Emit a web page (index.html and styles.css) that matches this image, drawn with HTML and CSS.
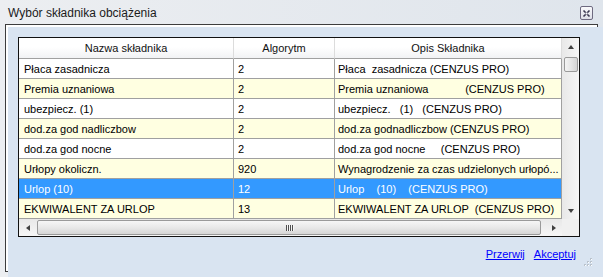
FILE: index.html
```html
<!DOCTYPE html>
<html lang="pl">
<head>
<meta charset="utf-8">
<title>Wybór składnika obciążenia</title>
<link rel="stylesheet" href="styles.css">
</head>
<body>
<div class="window">
  <div class="titlebar">
    <span class="title">Wybór składnika obciążenia</span>
    <span class="close">
      <svg width="13" height="14" viewBox="0 0 13 14">
        <defs>
          <linearGradient id="cg" x1="0" y1="0" x2="0" y2="1">
            <stop offset="0" stop-color="#fbfbfd"/>
            <stop offset="1" stop-color="#dcdde6"/>
          </linearGradient>
        </defs>
        <rect x="0.5" y="0.5" width="12" height="13" rx="1.5" fill="url(#cg)" stroke="#6e6a80"/>
        <path d="M3.5 4.5 L9.5 10.5 M9.5 4.5 L3.5 10.5" stroke="#3a3850" stroke-width="1.6"/>
        <rect x="5.5" y="6.5" width="2" height="2" fill="#f4f4f8"/>
      </svg>
    </span>
  </div>
  <div class="frame">
    <div class="panel">
      <div class="grid">
        <div class="grid-main">
          <div class="table">
            <div class="cell head">Nazwa składnika</div>
            <div class="cell head">Algorytm</div>
            <div class="cell head">Opis Składnika</div>

            <div class="cell c1">Płaca zasadnicza</div>
            <div class="cell c2">2</div>
            <div class="cell c3">Płaca  zasadnicza (CENZUS PRO)</div>

            <div class="cell c1 alt">Premia uznaniowa</div>
            <div class="cell c2 alt">2</div>
            <div class="cell c3 alt">Premia uznaniowa            (CENZUS PRO)</div>

            <div class="cell c1">ubezpiecz. (1)</div>
            <div class="cell c2">2</div>
            <div class="cell c3">ubezpiecz.   (1)   (CENZUS PRO)</div>

            <div class="cell c1 alt">dod.za god nadliczbow</div>
            <div class="cell c2 alt">2</div>
            <div class="cell c3 alt">dod.za godnadliczbow (CENZUS PRO)</div>

            <div class="cell c1">dod.za god nocne</div>
            <div class="cell c2">2</div>
            <div class="cell c3">dod.za god nocne     (CENZUS PRO)</div>

            <div class="cell c1 alt">Urłopy okoliczn.</div>
            <div class="cell c2 alt">920</div>
            <div class="cell c3 alt">Wynagrodzenie za czas udzielonych urłopó...</div>

            <div class="cell c1 sel">Urlop (10)</div>
            <div class="cell c2 sel">12</div>
            <div class="cell c3 sel">Urlop    (10)    (CENZUS PRO)</div>

            <div class="cell c1 alt">EKWIWALENT ZA URLOP</div>
            <div class="cell c2 alt">13</div>
            <div class="cell c3 alt">EKWIWALENT ZA URLOP  (CENZUS PRO)</div>
          </div>
          <div class="vscroll">
            <div class="sbtn"><span class="tri up"></span></div>
            <div class="vtrack"><div class="vthumb"></div></div>
            <div class="sbtn"><span class="tri down"></span></div>
          </div>
        </div>
        <div class="hrow">
          <div class="hscroll">
            <div class="sbtn"><span class="tri left"></span></div>
            <div class="htrack">
              <div class="hthumb"><span class="gripl"></span><span class="gripl"></span><span class="gripl"></span><span class="gripl"></span></div>
            </div>
            <div class="sbtn"><span class="tri right"></span></div>
          </div>
          <div class="corner"></div>
        </div>
      </div>
      <div class="actions">
        <a href="#" class="link">Przerwij</a>
        <a href="#" class="link">Akceptuj</a>
      </div>
    </div>
  </div>
  <svg class="grip" width="10" height="10" viewBox="0 0 10 10">
    <rect x="7" y="1" width="2" height="2" fill="#b9c2cc"/>
    <rect x="4" y="4" width="2" height="2" fill="#b9c2cc"/>
    <rect x="7" y="4" width="2" height="2" fill="#b9c2cc"/>
    <rect x="1" y="7" width="2" height="2" fill="#b9c2cc"/>
    <rect x="4" y="7" width="2" height="2" fill="#b9c2cc"/>
    <rect x="7" y="7" width="2" height="2" fill="#b9c2cc"/>
    <rect x="8" y="2" width="1" height="1" fill="#fff"/>
    <rect x="5" y="5" width="1" height="1" fill="#fff"/>
    <rect x="8" y="5" width="1" height="1" fill="#fff"/>
    <rect x="2" y="8" width="1" height="1" fill="#fff"/>
    <rect x="5" y="8" width="1" height="1" fill="#fff"/>
    <rect x="8" y="8" width="1" height="1" fill="#fff"/>
  </svg>
</div>
</body>
</html>
```
FILE: styles.css
```css
* { box-sizing: border-box; }
html, body { margin: 0; padding: 0; }
body {
  width: 603px;
  height: 277px;
  overflow: hidden;
  font-family: "Liberation Sans", Arial, sans-serif;
  font-size: 11px;
  color: #000;
}
.window {
  position: relative;
  width: 603px;
  height: 277px;
  overflow: hidden;
  background: linear-gradient(to right, #eceef1, #dfe5ec);
}
.titlebar {
  height: 24px;
  display: flex;
  align-items: flex-start;
  justify-content: space-between;
}
.title {
  padding-left: 8px;
  padding-top: 1px;
  line-height: 24px;
  font-size: 12px;
  color: #1b1b1b;
}
.close {
  display: block;
  margin-top: 6px;
  margin-right: 10px;
  width: 13px;
  height: 14px;
}
.close svg { display: block; }
.frame {
  margin-left: 5px;
  margin-right: 5px;
  height: 248px;
  border: 1px solid #3d3d3d;
  background: #ffffff;
  padding: 2px 0 0 2px;
}
.panel {
  background: #d9e4f1;
  height: 250px;
  margin-right: -6px;
  padding: 10px 0 0 10px;
}
.grid {
  width: 562px;
  border: 1px solid #111;
  background: #fff;
}
.grid-main {
  display: flex;
}
.table {
  display: grid;
  grid-template-columns: 215px 101px 227px;
  grid-template-rows: 21px repeat(8, 20px);
}
.cell {
  border-right: 1px solid #a0a0a0;
  border-bottom: 1px solid #a0a0a0;
  padding: 1px 4px 0 4px;
  line-height: 18px;
  white-space: pre;
  overflow: hidden;
  background: #fff;
}
.cell.c1 { padding-left: 5px; }
.cell.c3 { padding-left: 3px; }
.cell.alt { background: #ffffe1; }
.cell.sel { background: #3399ff; color: #fff; }
.cell.head {
  text-align: center;
  line-height: 19px;
  background: linear-gradient(#ffffff 0%, #ffffff 45%, #f1f2f4 100%);
  border-right: 1px solid #dcdcdc;
  border-bottom: 1px solid #a0a0a0;
  color: #111;
}
.vscroll {
  width: 17px;
  display: flex;
  flex-direction: column;
  background: linear-gradient(to right, #e8e8e8, #f6f6f6);
}
.sbtn {
  width: 17px;
  height: 17px;
  display: flex;
  align-items: center;
  justify-content: center;
  flex: none;
}
.vtrack {
  flex: 1;
  padding: 2px 1px 0 2px;
}
.vthumb {
  height: 15px;
  width: 14px;
  border: 1px solid #9a9a9a;
  border-radius: 2px;
  background: linear-gradient(to right, #f4f4f4, #e6e6e6 50%, #d4d4d4);
}
.tri {
  width: 0;
  height: 0;
  border-style: solid;
}
.tri.up { border-width: 0 3.5px 4px 3.5px; border-color: transparent transparent #404040 transparent; }
.tri.down { border-width: 4px 3.5px 0 3.5px; border-color: #404040 transparent transparent transparent; }
.tri.left { border-width: 3.5px 4px 3.5px 0; border-color: transparent #404040 transparent transparent; }
.tri.right { border-width: 3.5px 0 3.5px 4px; border-color: transparent transparent transparent #404040; }
.hrow {
  display: flex;
  height: 17px;
}
.hscroll {
  width: 543px;
  display: flex;
  background: linear-gradient(#e8e8e8, #f6f6f6);
}
.htrack {
  flex: 1;
  padding: 1px 4px 0 1px;
}
.hthumb {
  height: 15px;
  border: 1px solid #9a9a9a;
  border-radius: 2px;
  background: linear-gradient(#f6f6f6, #e8e8e8 50%, #d6d6d6);
  display: flex;
  align-items: center;
  justify-content: center;
}
.gripl {
  width: 1px;
  height: 6px;
  background: #4e4e4e;
  box-shadow: 1px 0 0 #f5f5f5;
}
.gripl + .gripl { margin-left: 1px; }
.corner {
  width: 17px;
  background: #f0f0f0;
}
.actions {
  display: flex;
  justify-content: flex-end;
  gap: 9px;
  margin-top: 11px;
  padding-right: 27px;
  line-height: 13px;
}
.link {
  color: #0000ff;
  text-decoration: underline;
}
.grip {
  position: absolute;
  right: 10px;
  bottom: 10px;
}
```
